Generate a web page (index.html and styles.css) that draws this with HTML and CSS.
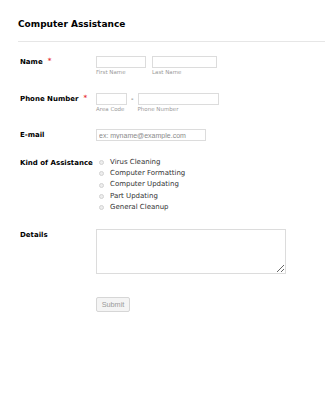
FILE: index.html
```html
<!DOCTYPE html>
<html lang="en">
<head>
  <meta charset="UTF-8" />
  <meta name="viewport" content="width=device-width, initial-scale=1.0"/>
  <title>Computer Assistance</title>
  <link rel="stylesheet" href="styles.css">
</head>
<body>
  <header class="form-header">
    <h1>Computer Assistance</h1>
  </header>

  <form class="form">
    <!-- Name -->
    <div class="row row-name">
      <label class="label">Name<span class="req">*</span></label>
      <div class="field split">
        <div class="sub">
          <input class="input w-first">
          <span class="sublabel">First Name</span>
        </div>
        <div class="sub">
          <input class="input w-last">
          <span class="sublabel">Last Name</span>
        </div>
      </div>
    </div>

    <!-- Phone -->
    <div class="row row-phone">
      <label class="label">Phone Number<span class="req">*</span></label>
      <div class="field split">
        <div class="sub">
          <input class="input w-area">
          <span class="sublabel">Area Code</span>
        </div>
        <span class="dash">-</span>
        <div class="sub">
          <input class="input w-phone">
          <span class="sublabel">Phone Number</span>
        </div>
      </div>
    </div>

    <!-- Email -->
    <div class="row row-email">
      <label class="label">E-mail</label>
      <div class="field">
        <input class="input w-email" placeholder="ex: myname@example.com">
      </div>
    </div>

    <!-- Kind of Assistance -->
    <div class="row row-kind">
      <label class="label label-list">Kind of Assistance</label>
      <div class="field options">
        <label class="option"><span class="radio"></span>Virus Cleaning</label>
        <label class="option"><span class="radio"></span>Computer Formatting</label>
        <label class="option"><span class="radio"></span>Computer Updating</label>
        <label class="option"><span class="radio"></span>Part Updating</label>
        <label class="option"><span class="radio"></span>General Cleanup</label>
      </div>
    </div>

    <!-- Details -->
    <div class="row row-details">
      <label class="label label-top">Details</label>
      <div class="field">
        <textarea class="textarea"></textarea>
      </div>
    </div>

    <div class="row row-submit">
      <span></span>
      <div class="field">
        <button type="button" class="submit">Submit</button>
      </div>
    </div>
  </form>
</body>
</html>
```

FILE: styles.css
```css
* { box-sizing: border-box; }

body {
  margin: 0;
  padding: 0;
  background: #fff;
  color: #000;
  font-family: "DejaVu Sans", Verdana, sans-serif;
}

.form-header {
  margin-left: 18px;
  padding-top: 18px;
  border-bottom: 1px solid #e6e6e6;
  padding-bottom: 11px;
}

.form-header h1 {
  margin: 0;
  font-size: 9px;
  line-height: 12px;
  font-weight: bold;
}

.form {
  padding-left: 20px;
}

.row {
  display: grid;
  grid-template-columns: 76px auto;
  align-items: start;
}

.row-name { margin-top: 14px; }
.row-phone { margin-top: 16px; }
.row-email { margin-top: 15px; }
.row-kind { margin-top: 16px; }
.row-details { margin-top: 16px; }
.row-submit { margin-top: 23px; }

.label {
  font-size: 7px;
  font-weight: bold;
  line-height: 12px;
  white-space: nowrap;
}

.label-list { line-height: 11.2px; margin-top: 1px; }
.label-top { line-height: 10px; margin-top: 1px; }

.req {
  color: #e8383a;
  margin-left: 5px;
  font-size: 7px;
  position: relative;
  top: -1px;
}

.split {
  display: flex;
  gap: 6px;
}

.sub {
  display: flex;
  flex-direction: column;
}

.input {
  display: block;
  height: 12px;
  margin: 0;
  padding: 0 2px;
  border: 1px solid #dcdcdc;
  background: #fff;
  font-family: "Liberation Sans", Arial, sans-serif;
  font-size: 7px;
}

.input::placeholder { color: #8a8a8a; }
.input:focus { outline: none; border-color: #bbb; }

.w-first { width: 50px; }
.w-last { width: 65px; }
.w-area { width: 31px; }
.w-phone { width: 81px; }
.w-email { width: 110px; }

.sublabel {
  font-size: 5.5px;
  line-height: 9px;
  color: #9a9a9a;
  white-space: nowrap;
}

.dash {
  font-size: 7px;
  line-height: 12px;
  margin: 0 -2px;
  color: #333;
}

.options {
  display: flex;
  flex-direction: column;
}

.option {
  display: flex;
  align-items: center;
  font-size: 7px;
  line-height: 11.2px;
  color: #333;
  white-space: nowrap;
}

.radio {
  width: 5px;
  height: 5px;
  margin: 0 6px 0 3px;
  border-radius: 50%;
  border: 1px solid #d2d2d2;
  background: #ededed;
}

.textarea {
  display: block;
  width: 190px;
  height: 45px;
  margin: 0;
  border: 1px solid #dcdcdc;
  font-size: 7px;
}

.submit {
  display: block;
  width: 34px;
  height: 15px;
  padding: 0;
  font-family: "Liberation Sans", Arial, sans-serif;
  font-size: 7.3px;
  color: #9a9a9a;
  background: #f4f4f4;
  border: 1px solid #d6d6d6;
  border-radius: 2px;
}
```
